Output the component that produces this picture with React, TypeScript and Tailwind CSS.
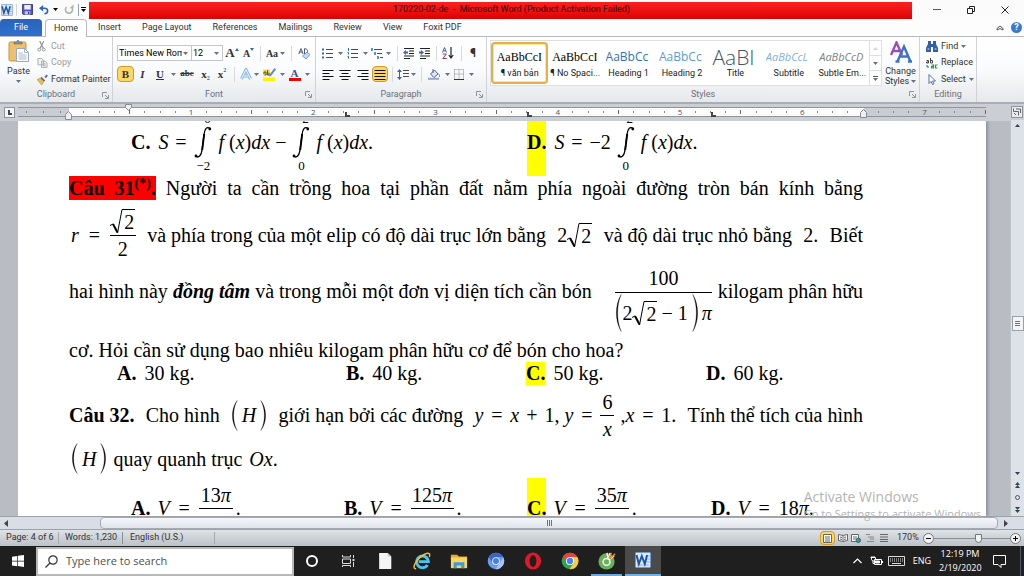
import React from "react";

type Kids = { children?: React.ReactNode; className?: string };

const Caret = ({ className = "text-gray-500" }: { className?: string }) => (
  <svg viewBox="0 0 5 3" className={`h-[3px] w-[5px] shrink-0 ${className}`} aria-hidden="true">
    <path d="M0 0h5L2.500 3z" fill="currentColor" />
  </svg>
);

const Sep = ({ className = "" }: { className?: string }) => (
  <span className={`flex justify-center ${className}`}>
    <i className="h-[15px] w-px bg-[#d5d8dc]" />
  </span>
);

const Tool = ({ label, className = "", children }: Kids & { label: string }) => (
  <button aria-label={label} className={`flex h-4 shrink-0 items-center justify-center ${className}`}>
    {children}
  </button>
);

const WordLogo = ({ className = "" }: { className?: string }) => (
  <svg viewBox="0 0 16 16" className={className} aria-hidden="true">
    <rect x=".5" y=".5" width="15" height="15" rx="1" fill="#dfeaf8" stroke="#6f9bd6" />
    <path d="M11 4h4M11 7h4M11 10h4M2 13h12" stroke="#8fb0dc" />
    <path d="M1.500 3l2.300 9L6.800 4l3 8 2.300-9" fill="none" stroke="#1d54ab" strokeWidth="2" />
  </svg>
);

/* ---------- title bar ---------- */

function TitleBar() {
  return (
    <header className="flex h-[19px] items-center bg-[#fbfbfc]">
      <div className="flex w-[89px] shrink-0 items-center pl-px">
        <WordLogo className="h-3 w-3" />
        <i className="ml-[3px] h-3 w-px bg-gray-300" />
        <button aria-label="Save" className="ml-[5px]">
          <svg viewBox="0 0 12 12" className="h-[11px] w-[11px]">
            <path d="M.5.500h11v11h-10l-1-1z" fill="#5557b8" stroke="#35378f" />
            <rect x="2.500" y="1" width="7" height="5" fill="#eef0fb" />
            <rect x="3" y="8" width="6" height="3.500" fill="#c9cdea" />
            <rect x="6.500" y="8.500" width="1.500" height="2.500" fill="#35378f" />
          </svg>
        </button>
        <button aria-label="Undo" className="ml-[6px]">
          <svg viewBox="0 0 12 12" className="h-[11px] w-[10px]">
            <path d="M2.500 4.500h4.500c4.500 0 4.500 6.500-.5 6.500" fill="none" stroke="#2f66bd" strokeWidth="2" />
            <path d="M0 4.500L5 .5v8z" fill="#2f66bd" />
          </svg>
        </button>
        <Caret className="ml-[4px] text-black" />
        <button aria-label="Redo" className="ml-[6px]">
          <svg viewBox="0 0 12 12" className="h-[11px] w-[10px]">
            <path d="M3 3a4.300 4.300 0 1 0 6 0" fill="none" stroke="#b4b4b4" strokeWidth="2" />
            <path d="M6.500 4.500h5V0z" fill="#b4b4b4" />
          </svg>
        </button>
        <i className="ml-[4px] h-3 w-px bg-gray-400" />
        <span className="ml-[2px] flex flex-col gap-px">
          <i className="h-px w-[5px] bg-black" />
          <Caret className="text-black" />
        </span>
      </div>
      <h1 className="mt-px flex h-[17px] flex-1 items-center justify-center whitespace-pre bg-linear-to-b from-[#fb2020] to-[#dc0000] pl-[22px] font-[Roboto] text-[9px] text-[#2c0000]">
        170220-02-de  -  Microsoft Word (Product Activation Failed)
      </h1>
      <div className="flex w-28 shrink-0 items-center">
        <button aria-label="Minimize" className="flex w-[50px] justify-center">
          <i className="h-px w-2 bg-gray-600" />
        </button>
        <button aria-label="Restore" className="flex w-[18px] justify-center">
          <svg viewBox="0 0 8 8" className="h-2 w-2" fill="none" stroke="#222">
            <path d="M.5 2.500h5v5h-5zM2.500 2V.5h5v5H6" />
          </svg>
        </button>
        <button aria-label="Close" className="ml-[21px] flex w-2 justify-center">
          <svg viewBox="0 0 8 8" className="h-2 w-2" fill="none" stroke="#222">
            <path d="M.5.500l7 7M7.500.500l-7 7" />
          </svg>
        </button>
      </div>
    </header>
  );
}

const tabs = ["Insert", "Page Layout", "References", "Mailings", "Review", "View", "Foxit PDF"];

function Tabs() {
  return (
    <nav className="flex h-[18px] items-end border-b border-[#b6bac0] bg-[#fdfdfe] font-[Roboto] text-[9px] text-[#333]">
      <button className="h-[17px] w-[42px] rounded-t-sm bg-linear-to-b from-[#2a62bb] to-[#2e70cf] text-white">File</button>
      <button className="-mb-px ml-[3px] h-[18px] w-[42px] rounded-t-sm border border-b-0 border-[#b6bac0] bg-white">Home</button>
      <div className="flex h-[17px] gap-[21px] pl-[11px]">
        {tabs.map((t) => (
          <button key={t} className="whitespace-nowrap">{t}</button>
        ))}
      </div>
      <div className="ml-auto flex h-[17px] items-center gap-[7px] pr-[2px]">
        <button aria-label="Minimize the Ribbon">
          <svg viewBox="0 0 8 6" className="h-[6px] w-2" fill="none" stroke="#555">
            <path d="M1 3.500L4 1l3 2.500v1.500L4 3.500 1 5z" />
          </svg>
        </button>
        <button aria-label="Help" className="flex h-[11px] w-[11px] items-center justify-center rounded-full bg-[#3c78cf] text-[9px] font-bold text-white">?</button>
      </div>
    </nav>
  );
}

/* ---------- ribbon ---------- */

function Group({ name, className = "", launcher = true, children }: Kids & { name: string; launcher?: boolean }) {
  return (
    <section className={`flex shrink-0 flex-col border-r border-[#cfd3d8] ${className}`}>
      <div className="flex-1">{children}</div>
      <div className="flex h-[15px] items-center">
        <span className="flex-1 text-center text-[#6a7078]">{name}</span>
        {launcher && (
          <button aria-label={`${name} options`} className="-ml-[10px] mr-[3px]">
            <svg viewBox="0 0 7 7" className="h-[7px] w-[7px]" fill="none" stroke="#8d949c">
              <path d="M.5 5V.5H5M3 3l3 3M6.500 3v3.500H3" />
            </svg>
          </button>
        )}
      </div>
    </section>
  );
}

function Clipboard() {
  return (
    <Group name="Clipboard" className="w-[113px]">
      <div className="flex pt-px">
        <button className="flex w-[37px] flex-col items-center pt-[2px]">
          <svg viewBox="0 0 22 22" className="h-[22px] w-[22px]">
            <rect x="1" y="2" width="17" height="19" rx="1.500" fill="#efc06c" stroke="#c8933e" />
            <path d="M6 4V2h2.500C9-.2 11-.2 11.500 2H14v2z" fill="#8c9199" stroke="#666b73" strokeWidth=".6" />
            <path d="M8.500 8.500h8l4 4v9h-12z" fill="#fff" stroke="#9aa9c0" />
            <path d="M16.500 8.500v4h4M10.500 13h4M10.500 15h8M10.500 17h8M10.500 19h8" fill="none" stroke="#8fa3c4" strokeWidth=".8" />
          </svg>
          <span className="mt-[4px] leading-[11px]">Paste</span>
          <Caret className="mt-[3px] text-gray-500" />
        </button>
        <div className="flex flex-col">
          <button className="flex h-[17px] items-center gap-[5px] text-[#9b9b9b]">
            <svg viewBox="0 0 10 12" className="h-[11px] w-[9px]" fill="none" stroke="#8f8f8f">
              <path d="M3 0l4 8M7.500 0l-4 8" strokeWidth="1.300" />
              <circle cx="2.500" cy="9.500" r="1.600" />
              <circle cx="7.500" cy="9.500" r="1.600" />
            </svg>
            Cut
          </button>
          <button className="flex h-[16px] items-center gap-[3px] text-[#9b9b9b]">
            <svg viewBox="0 0 11 11" className="h-[10px] w-[11px]" fill="#f2f2f2" stroke="#a8a8a8">
              <path d="M.5.500h4l2 2v5h-6zM4.500 3.500h4l2 2v5h-6z" />
              <path d="M6 6.500h3M6 8.500h3" />
            </svg>
            Copy
          </button>
          <button className="flex h-[17px] items-center gap-[3px] whitespace-nowrap">
            <svg viewBox="0 0 12 12" className="h-[11px] w-[11px]">
              <path d="M8 3l2.500-2.500L12 2 9.500 4.500z" fill="#5573a8" />
              <path d="M5 3l4 4-1.500 1.500-4-4z" fill="#6a6f7c" />
              <path d="M3.500 4.500L7.500 8.500 5 12 0 6z" fill="#e9bd50" stroke="#b98a2a" strokeWidth=".6" />
            </svg>
            Format Painter
          </button>
        </div>
      </div>
    </Group>
  );
}

function Combo({ label, value, className }: { label: string; value: string; className: string }) {
  return (
    <span className={`relative flex h-4 shrink-0 items-center border border-[#c3c7cc] bg-white ${className}`}>
      <select aria-label={label} defaultValue={value} className="w-full appearance-none overflow-hidden whitespace-nowrap bg-transparent pl-px pr-[9px] text-[9px] leading-[14px] text-black outline-none">
        <option>{value}</option>
      </select>
      <Caret className="pointer-events-none absolute right-[3px] text-gray-500" />
    </span>
  );
}

function FontGroup() {
  return (
    <Group name="Font" className="w-[203px]">
      <div className="flex flex-col gap-[5px] pl-1 pt-[8px]">
        <div className="flex items-center">
          <Combo label="Font" value="Times New Rom" className="w-[75px]" />
          <Combo label="Font Size" value="12" className="-ml-px w-8" />
          <Tool label="Grow Font" className="w-[18px] font-serif text-[13px] font-bold">
            A<svg viewBox="0 0 4 3" className="mb-2 h-[3px] w-1"><path d="M0 3h4L2 0z" fill="#3568b5" /></svg>
          </Tool>
          <Tool label="Shrink Font" className="w-[15px] font-serif text-[10px] font-bold">
            A<svg viewBox="0 0 4 3" className="mb-2 h-[3px] w-1"><path d="M0 0h4L2 3z" fill="#3568b5" /></svg>
          </Tool>
          <Sep className="w-2" />
          <Tool label="Change Case" className="w-[23px] gap-[2px] font-serif text-[10px] font-bold">Aa<Caret /></Tool>
          <Sep className="w-2" />
          <Tool label="Clear Formatting" className="w-[18px]">
            <svg viewBox="0 0 12 12" className="h-3 w-3">
              <path d="M.8 7L3 1.500 5 7M1.500 5h3M6.500 1.500V7M6.500 2c4-1.500 4 5.500 0 4.500" fill="none" stroke="#4a5a7a" />
              <path d="M4.500 9l4.500-4 3 2.500L8 12z" fill="#c8d6f0" stroke="#5b7bb5" strokeWidth=".7" />
            </svg>
          </Tool>
        </div>
        <div className="flex items-center">
          <Tool label="Bold" className="w-[17px] rounded-sm border border-[#d09a2c] bg-[#fcd768] font-serif text-[11px] font-bold">B</Tool>
          <Tool label="Italic" className="w-[17px] font-serif text-[11px] font-bold italic">I</Tool>
          <Tool label="Underline" className="w-[18px] font-serif text-[11px] font-bold underline">U</Tool>
          <Tool label="Underline style" className="w-2"><Caret /></Tool>
          <Tool label="Strikethrough" className="w-5 font-serif text-[9px] font-bold line-through">abc</Tool>
          <Tool label="Subscript" className="w-[17px] font-serif text-[11px] font-bold">
            x<span className="mt-2 text-[6px] text-[#3568b5]">2</span>
          </Tool>
          <Tool label="Superscript" className="w-4 font-serif text-[11px] font-bold">
            x<span className="mb-2 text-[6px] text-[#3568b5]">2</span>
          </Tool>
          <Sep className="w-[9px]" />
          <Tool label="Text Effects" className="w-[14px]">
            <svg viewBox="0 0 12 12" className="h-3 w-3" fill="none">
              <path d="M1.500 11L6 1.500 10.500 11M3.500 8h5" stroke="#8dbbe8" strokeWidth="3" />
              <path d="M1.500 11L6 1.500 10.500 11M3.500 8h5" stroke="#e8f3fc" strokeWidth="1" />
            </svg>
          </Tool>
          <Tool label="Text Effects menu" className="w-[7px]"><Caret /></Tool>
          <Tool label="Highlight" className="w-[19px]">
            <svg viewBox="0 0 13 13" className="h-[13px] w-[13px]">
              <path d="M0 9.500h12V13H0z" fill="#fff200" />
              <path d="M0 1.500h7v6H0z" fill="#f2e04a" />
              <path d="M1 6V4h2v3H1.500M4.500 2v5H6V4.500" fill="none" stroke="#333" strokeWidth=".8" />
              <path d="M11.500 0L13 1.500 8 8l-2 .5.500-2z" fill="#6b88bd" />
            </svg>
          </Tool>
          <Tool label="Highlight color" className="w-[7px]"><Caret /></Tool>
          <Tool label="Font Color" className="w-[17px] flex-col font-serif text-[11px] font-bold leading-[10px] text-[#2f559c]">
            A<i className="h-[3px] w-3 bg-[#f00000]" />
          </Tool>
          <Tool label="Font Color menu" className="w-2"><Caret /></Tool>
        </div>
      </div>
    </Group>
  );
}

const Glyph = ({ children, className = "h-[11px] w-3" }: Kids) => (
  <svg viewBox="0 0 12 11" className={className} fill="none" stroke="#4a4a4a">{children}</svg>
);

function ParagraphGroup() {
  return (
    <Group name="Paragraph" className="w-[171px]">
      <div className="flex flex-col gap-[5px] pl-[3px] pt-[8px]">
        <div className="flex items-center">
          <Tool label="Bullets" className="w-[17px]">
            <Glyph>
              <path d="M4 1.500h7M4 5.500h7M4 9.500h7" />
              <path d="M0 1.500h2M0 5.500h2M0 9.500h2" stroke="#3467b8" strokeWidth="2" />
            </Glyph>
          </Tool>
          <Tool label="Bullet library" className="w-2"><Caret /></Tool>
          <Tool label="Numbering" className="w-[17px]">
            <Glyph>
              <path d="M4 1.500h7M4 5.500h7M4 9.500h7" />
              <path d="M1.500 0v3M.5 4.500h1v2M.5 8.500h1v2" stroke="#3467b8" />
            </Glyph>
          </Tool>
          <Tool label="Number library" className="w-2"><Caret /></Tool>
          <Tool label="Multilevel List" className="w-[15px]">
            <Glyph>
              <path d="M3 1.500h8M6 5.500h5M9 9.500h3" />
              <path d="M1 0v3M4 4v3M7 8v3" stroke="#3467b8" strokeWidth="1.500" />
            </Glyph>
          </Tool>
          <Tool label="List library" className="w-[9px]"><Caret /></Tool>
          <Sep className="w-2" />
          <Tool label="Decrease Indent" className="w-4">
            <Glyph>
              <path d="M1 .5h10M6 3h5M6 5.500h5M1 8h10M1 10.500h6" stroke="#222" />
              <path d="M5 4.500H2" stroke="#3467b8" strokeWidth="2" />
              <path d="M0 4.500L3 2v5z" fill="#3467b8" stroke="none" />
            </Glyph>
          </Tool>
          <Tool label="Increase Indent" className="w-4">
            <Glyph>
              <path d="M1 .5h10M6 3h5M6 5.500h5M1 8h10M1 10.500h6" stroke="#222" />
              <path d="M0 4.500h3" stroke="#3467b8" strokeWidth="2" />
              <path d="M5 4.500L2 2v5z" fill="#3467b8" stroke="none" />
            </Glyph>
          </Tool>
          <Sep className="w-[6px]" />
          <Tool label="Sort" className="w-[18px]">
            <svg viewBox="0 0 12 12" className="h-3 w-3" fill="none">
              <path d="M.5 5.500L2.500.500l2 5M1.300 3.800h2.500" stroke="#3467b8" />
              <path d="M.8 7h3.500L.8 11.500h4" stroke="#a03a5a" />
              <path d="M9 0v10M6.800 8L9 11l2.200-3" stroke="#222" strokeWidth="1.200" />
            </svg>
          </Tool>
          <Sep className="w-2" />
          <Tool label="Show marks" className="w-4 text-[12px] font-bold">¶</Tool>
        </div>
        <div className="flex items-center">
          <Tool label="Align Left" className="w-[17px]">
            <Glyph><path d="M.5 1.500h11M.5 4.500h7M.5 7.500h11M.5 10.500h7" stroke="#111" strokeWidth="1.200" /></Glyph>
          </Tool>
          <Tool label="Center" className="w-[17px]">
            <Glyph><path d="M.5 1.500h11M2.500 4.500h7M.5 7.500h11M2.500 10.500h7" stroke="#111" strokeWidth="1.200" /></Glyph>
          </Tool>
          <Tool label="Align Right" className="w-[19px]">
            <Glyph><path d="M.5 1.500h11M4.500 4.500h7M.5 7.500h11M4.500 10.500h7" stroke="#111" strokeWidth="1.200" /></Glyph>
          </Tool>
          <Tool label="Justify" className="w-4 rounded-sm border border-[#d09a2c] bg-[#fcd768]">
            <Glyph><path d="M.5 1.500h11M.5 4.500h11M.5 7.500h11M.5 10.500h11" stroke="#111" strokeWidth="1.200" /></Glyph>
          </Tool>
          <Sep className="w-2" />
          <Tool label="Line Spacing" className="w-[14px]">
            <Glyph>
              <path d="M6 1.500h6M6 4.500h6M6 7.500h6" />
              <path d="M2.500 1v9" stroke="#3467b8" />
              <path d="M0 3L2.500 0 5 3zM0 8l2.500 3L5 8z" fill="#3467b8" stroke="none" />
            </Glyph>
          </Tool>
          <Tool label="Line Spacing menu" className="w-[7px]"><Caret /></Tool>
          <Sep className="w-2" />
          <Tool label="Shading" className="w-[18px]">
            <Glyph>
              <path d="M2.500 5L6.500 1 10 5 6 8.500z" fill="#dfe6f2" stroke="#56657f" />
              <path d="M5 4V0M10.500 5c1.500 1 1.500 2 1 3" stroke="#56657f" />
              <path d="M0 9.800h11" stroke="#8fa9d2" strokeWidth="2" />
            </Glyph>
          </Tool>
          <Tool label="Shading menu" className="w-2"><Caret /></Tool>
          <Tool label="Borders" className="w-4">
            <Glyph>
              <path d="M1.500.500h9v9.500M1.500.500V10M6 .5V10M1.500 5h9" stroke="#8d8d8d" strokeDasharray="1 1" />
              <path d="M1 10.500h10" stroke="#333" />
            </Glyph>
          </Tool>
          <Tool label="Borders menu" className="w-2"><Caret /></Tool>
        </div>
      </div>
    </Group>
  );
}

const styleItems = [
  { name: "¶ văn bản", sample: "AaBbCcI", look: "font-[Liberation_Serif] text-[12px] text-black" },
  { name: "¶ No Spaci...", sample: "AaBbCcI", look: "font-[Liberation_Serif] text-[12px] text-black" },
  { name: "Heading 1", sample: "AaBbCc", look: "font-[Open_Sans] text-[12px] text-[#2e74b5]" },
  { name: "Heading 2", sample: "AaBbCc", look: "font-[Open_Sans] text-[12px] text-[#5b9bd5]" },
  { name: "Title", sample: "AaBI", look: "font-[Open_Sans] text-[21px] font-light text-[#44546a]" },
  { name: "Subtitle", sample: "AaBbCcL", look: "font-[Open_Sans] text-[11px] italic text-[#7fb2e0]" },
  { name: "Subtle Em...", sample: "AaBbCcD", look: "font-[Open_Sans] text-[11px] italic text-[#808080]" },
];

function StylesGroup() {
  return (
    <Group name="Styles" className="min-w-[433px] flex-1">
      <div className="flex pl-[3px] pt-[3px]">
        <div className="flex h-[46px] flex-1 border border-[#dcdfe3] bg-white">
          {styleItems.map((s, i) => (
            <button
              key={s.name}
              className={`flex min-w-0 flex-1 basis-0 flex-col items-center overflow-hidden ${i === 0 ? "my-px rounded-sm border-2 border-[#e3b04b] pt-[3px] ring-1 ring-inset ring-[#fde79a]" : "pt-[6px]"}`}
            >
              <span className={`flex h-5 w-[46px] items-center justify-start overflow-hidden whitespace-nowrap leading-5 ${s.look}`}>{s.sample}</span>
              <span className="whitespace-nowrap leading-[13px] text-[#222]">{s.name}</span>
            </button>
          ))}
          <div className="flex w-3 flex-col border-l border-[#dcdfe3]">
            <button aria-label="Previous styles" className="flex flex-1 items-center justify-center border-b border-[#dcdfe3]"><Caret className="rotate-180 text-gray-300" /></button>
            <button aria-label="Next styles" className="flex flex-1 items-center justify-center border-b border-[#dcdfe3]"><Caret /></button>
            <button aria-label="More styles" className="flex flex-1 flex-col items-center justify-center gap-px"><i className="h-px w-[5px] bg-gray-600" /><Caret /></button>
          </div>
        </div>
        <button className="flex w-[37px] flex-col items-center pt-px leading-[10px]">
          <svg viewBox="0 0 22 22" className="h-[22px] w-[22px]" fill="none">
            <path d="M1 14L6.500 1.500 12 14M3.500 10h6" stroke="#9a4fb8" strokeWidth="2.400" />
            <path d="M7.500 20.500L14 5.500l6.500 15M10 15.500h8M5.500 20.500h4M18 20.500h4" stroke="#3a74c8" strokeWidth="2.400" />
          </svg>
          <span className="mt-[3px]">Change</span>
          <span className="flex items-center gap-[2px]">Styles <Caret /></span>
        </button>
      </div>
    </Group>
  );
}

function EditingGroup() {
  return (
    <Group name="Editing" launcher={false} className="w-[57px]">
      <div className="flex flex-col pl-[6px] pt-px">
        <button className="flex h-[17px] items-center gap-[3px]">
          <svg viewBox="0 0 12 11" className="h-[11px] w-3" fill="#2f5fa8">
            <path d="M2 0h3v3h2V0h3v3l2 4v4H7V6H5v5H0V7l2-4z" />
            <path d="M1.500 8h2M8.500 8h2" stroke="#cfe0f7" />
          </svg>
          Find <Caret />
        </button>
        <button className="flex h-[16px] items-center gap-[3px]">
          <svg viewBox="0 0 12 11" className="h-[11px] w-3" fill="none">
            <path d="M.5 2.500h2v2.500h-2v-1h2M4.500 0v5h2V2.500h-2" stroke="#444" />
            <path d="M5.500 7h2v3h-2V8.500h2M11.500 7H9.500v3h2" stroke="#3d8f4a" strokeWidth="1.200" />
            <path d="M1 7v2h2" stroke="#2f5fa8" />
          </svg>
          Replace
        </button>
        <button className="flex h-[17px] items-center gap-[3px]">
          <svg viewBox="0 0 12 11" className="h-[11px] w-3">
            <path d="M3 .5v9l2-2 1.500 3 1.500-.8L6.500 7h3z" fill="#fff" stroke="#4b72b0" />
          </svg>
          Select <Caret />
        </button>
      </div>
    </Group>
  );
}

/* ---------- ruler ---------- */

const TabStop = ({ className = "" }: { className?: string }) => (
  <i className={`absolute bottom-[-1px] h-[5px] w-[5px] border-b-2 border-l-2 border-[#444] ${className}`} />
);

const Marker = ({ className = "", down = false }: { className?: string; down?: boolean }) => (
  <svg viewBox="0 0 7 9" className={`absolute h-[9px] w-[7px] ${className}`} fill="#eceef0" stroke="#8a8d92">
    {down ? <path d="M.5.500h6v3L3.500 6.500.5 3.500z" /> : <path d="M3.500.500l3 3v5h-6v-5z" />}
  </svg>
);

function Tick({ n, white }: { n: number; white: boolean }) {
  return (
    <span className={`flex min-w-0 flex-1 items-center justify-end ${white ? "bg-[#fcfcfd]" : "bg-[#c9cdd3]"}`}>
      {n % 8 === 0 ? (
        <b className="relative -mr-[2px] text-[8px] font-normal leading-none text-[#555]">{n / 8}</b>
      ) : n % 4 === 0 ? (
        <i className="h-1 w-px bg-[#666]" />
      ) : (
        <i className="h-[2px] w-px bg-[#888]" />
      )}
    </span>
  );
}

function Ruler() {
  return (
    <div className="flex h-[18px] items-center border-t-2 border-[#a9adb4] bg-[#cbcfd5]">
      <button aria-label="Tab selector" className="ml-1 flex h-[11px] w-[11px] items-center justify-center border border-[#8f949b] bg-[#f4f5f6]">
        <i className="h-[5px] w-[4px] border-b-2 border-l-2 border-[#444]" />
      </button>
      <div className="relative ml-[3px] flex h-[10px] flex-1 border-y border-[#8f949b]">
        <div className="flex w-[51px] shrink-0 items-center justify-around bg-[#c9cdd3]">
          {[0, 1, 2].map((i) => <i key={i} className="h-[2px] w-px bg-[#888]" />)}
        </div>
        {Array.from({ length: 60 }, (_, i) => <Tick key={i} n={i + 1} white={i < 52} />)}
        <Marker down className="left-[107px] top-[-4px]" />
        <Marker className="left-[47px] top-[3px]" />
        <Marker className="right-[119px] top-[1px]" />
        <TabStop className="left-[327px]" />
        <TabStop className="left-[509px]" />
        <TabStop className="left-[693px]" />
      </div>
      <div className="flex w-[38px] shrink-0 justify-end pr-px">
        <button aria-label="View Ruler" className="flex h-3 w-3 items-center justify-center border border-[#8f949b] bg-[#e8eaed]">
          <svg viewBox="0 0 8 8" className="h-2 w-2" fill="none" stroke="#666"><path d="M.5.500v3h5v4M3 1h4.500v4M1 5l2 2" /></svg>
        </button>
      </div>
    </div>
  );
}

/* ---------- math ---------- */

const Eq = () => <span className="w-[15px] shrink-0 text-center">=</span>;

const Frac = ({ top, bottom, className = "" }: { top: React.ReactNode; bottom?: React.ReactNode; className?: string }) => (
  <span className={`inline-flex flex-col items-stretch text-center ${className}`}>
    <span className="flex h-[26px] items-center justify-center">{top}</span>
    <i className="h-px bg-black" />
    <span className="flex h-[26px] items-center justify-center">{bottom}</span>
  </span>
);

const Root = ({ children }: Kids) => (
  <span className="inline-flex items-stretch leading-[24px]">
    <svg viewBox="0 0 13 25" className="h-[25px] w-[13px] shrink-0" fill="none" stroke="#000">
      <path d="M0 16.500l3-1.500" />
      <path d="M3 15l4.500 8.500" strokeWidth="2" />
      <path d="M7.500 24L12 .5h1" />
    </svg>
    <span className="border-t border-black px-px">{children}</span>
  </span>
);

const Paren = ({ right = false, className = "h-[31px]" }: { right?: boolean; className?: string }) => (
  <svg viewBox="0 0 7 32" preserveAspectRatio="none" className={`w-[7px] shrink-0 ${right ? "-scale-x-100" : ""} ${className}`}>
    <path d="M6.200.500C-.2 9-.2 23 6.200 31.500 1.400 23 1.400 9 6.200.500z" fill="#000" stroke="#000" strokeWidth=".3" />
  </svg>
);

const Integral = ({ from, to }: { from: string; to: string }) => (
  <span className="inline-flex w-[20px] flex-col items-center text-[13px] leading-[14px]">
    <span className="pl-2">{to}</span>
    <svg viewBox="0 0 18 33" className="h-[33px] w-[18px]">
      <path d="M16.500 2.800C13-.2 10.800 2.500 10 8.500L8.200 23C7.300 30 4.500 32.500 1.500 30" fill="none" stroke="#000" strokeWidth="1.300" />
      <path d="M10.200 8L8.200 24" stroke="#000" strokeWidth="1.900" />
      <circle cx="15.800" cy="3" r="1.400" />
      <circle cx="2" cy="30" r="1.400" />
    </svg>
    <span>{from}</span>
  </span>
);

const Fx = ({ end = true }: { end?: boolean }) => (
  <span className="whitespace-pre"><i>f</i> (<i>x</i>)<i>dx</i>{end && "."}</span>
);

const Mark = ({ children, className = "" }: Kids) => (
  <b className={`flex items-center bg-[#ffff00] ${className}`}>{children}</b>
);

/* ---------- document ---------- */

function Page() {
  return (
    <article className="min-w-0 flex-1 bg-white pl-[51px] pr-[123px] font-[Liberation_Serif] text-[20px] leading-[24px] text-black shadow-[2px_0_3px_#8d929a]">
      <div className="grid h-[55px] grid-cols-[396fr_336fr] pl-[62px]">
        <div className="flex h-[42px] items-center gap-2">
          <b>C.</b>
          <span className="flex items-center gap-[5px]"><i>S</i> <Eq /> <Integral from="−2" to="0" /> <Fx end={false} /> <span>−</span><Integral from="0" to="2" /> <Fx /></span>
        </div>
        <div className="flex h-[42px] items-center gap-2">
          <Mark className="h-[55px] self-start pb-[13px]">D.</Mark>
          <span className="flex items-center gap-[5px]"><i>S</i> <Eq /> <span>−2</span><Integral from="0" to="2" /> <Fx /></span>
        </div>
      </div>
      <p className="h-6 text-justify [text-align-last:justify]">
        <b className="inline-block h-6 bg-[#ff0000]"><span>Câu&nbsp; 31</span><sup className="text-[14px] leading-none">(*)</sup>.</b> Người ta cần trồng hoa tại phần đất nằm phía ngoài đường tròn bán kính bằng
      </p>
      <div className="flex h-[67px] items-center justify-between whitespace-nowrap pt-[3px]">
        <span className="flex items-center gap-[8px] pl-[2px]">
          <i>r</i> <Eq /> <Frac className="w-[26px]" top={<Root>2</Root>} bottom="2" />
        </span>
        <span>và phía trong của một elip có độ dài trục lớn bằng</span>
        <span className="flex items-center">2<Root>2</Root></span>
        <span>và độ dài trục nhỏ bằng</span>
        <span>2.</span>
        <span>Biết</span>
      </div>
      <div className="flex h-[68px] items-start justify-between whitespace-nowrap">
        <span className="leading-[48px]">hai hình này <b><i>đồng tâm</i></b> và trong mỗi một đơn vị diện tích cần bón</span>
        <span className="flex items-start">
          <span className="flex flex-col">
            <span className="flex h-[25px] items-center justify-center pb-1">100</span>
            <i className="h-px bg-black" />
            <span className="flex h-[40px] items-center">
              <Paren className="h-[38px]" />2<Root>2</Root><span className="px-1">− 1</span><Paren right className="h-[38px]" /><i className="pl-[3px]">π</i>
            </span>
          </span>
          <span className="pl-[6px] leading-[48px]">kilogam phân hữu</span>
        </span>
      </div>
      <p className="h-[27px] whitespace-nowrap pt-[3px]">cơ. Hỏi cần sử dụng bao nhiêu kilogam phân hữu cơ để bón cho hoa?</p>
      <div className="grid h-[23px] grid-cols-[229fr_180fr_180fr_157fr] pl-12 leading-[23px]">
        <span className="flex gap-2"><b>A.</b> 30 kg.</span>
        <span className="flex gap-2"><b>B.</b> 40 kg.</span>
        <span className="flex gap-2"><Mark>C.</Mark> 50 kg.</span>
        <span className="flex gap-2"><b>D.</b> 60 kg.</span>
      </div>
      <div className="flex h-[52px] items-center justify-between whitespace-nowrap pt-2">
        <b>Câu 32.</b>
        <span>Cho hình</span>
        <span className="flex items-center"><Paren /><i className="px-1">H</i><Paren right /></span>
        <span>giới hạn bởi các đường</span>
        <span className="flex items-center gap-[6px]">
          <i>y</i> <Eq /> <i>x</i> <span className="px-px">+</span> <span>1, <i>y</i></span> <Eq /> <Frac className="w-[14px]" top="6" bottom={<i>x</i>} />
          <span>,<i>x</i></span> <Eq /> <span>1.</span>
        </span>
        <span>Tính thể tích của hình</span>
      </div>
      <div className="flex h-[41px] items-center gap-[6px] pl-[2px] pt-[2px]">
        <span className="flex items-center"><Paren /><i className="px-1">H</i><Paren right /></span>
        <span>quay quanh trục</span> <span className="pl-px"><i>Ox</i>.</span>
      </div>
      <div className="grid h-[60px] grid-cols-[213fr_183fr_184fr_152fr] pl-[62px]">
        <span className="flex items-center gap-[7px]"><b>A.</b><i>V</i> <Eq /> <Frac className="w-[34px]" top={<>13<i>π</i></>} /><span className="-ml-1">.</span></span>
        <span className="flex items-center gap-[7px]"><b>B.</b><i>V</i> <Eq /> <Frac className="w-[43px]" top={<>125<i>π</i></>} /><span className="-ml-1">.</span></span>
        <span className="flex items-center gap-[7px]"><Mark className="h-full">C.</Mark><i>V</i> <Eq /> <Frac className="w-[34px]" top={<>35<i>π</i></>} /><span className="-ml-1">.</span></span>
        <span className="flex items-center gap-[7px]"><b>D.</b><i>V</i> <Eq /> <span>18<i>π</i>.</span></span>
      </div>
    </article>
  );
}

function VerticalScroll() {
  return (
    <div className="flex w-[14px] shrink-0 flex-col items-center border-l border-[#bfc4cb] bg-[#dde1e8] pb-[3px] pt-1">
      <Caret className="rotate-180 text-gray-700" />
      <div className="grow-[190]" />
      <div className="flex h-[15px] w-3 flex-col items-center justify-center gap-px border border-[#9ba0a8] bg-[#f3f4f7]">
        <i className="h-px w-[5px] bg-gray-500" />
        <i className="h-px w-[5px] bg-gray-500" />
        <i className="h-px w-[5px] bg-gray-500" />
      </div>
      <div className="grow-[142]" />
      <Caret className="text-gray-700" />
      <button aria-label="Previous page" className="mt-[7px] flex flex-col"><Caret className="rotate-180 text-gray-700" /><Caret className="rotate-180 text-gray-700" /></button>
      <button aria-label="Select browse object" className="mt-[7px] h-[5px] w-[5px] rounded-full border border-gray-600" />
      <button aria-label="Next page" className="mt-[7px] flex flex-col"><Caret className="text-gray-700" /><Caret className="text-gray-700" /></button>
    </div>
  );
}

function HorizontalScroll() {
  return (
    <div className="flex h-[14px] items-center border-y border-[#9da2aa] bg-[#d9dee6]">
      <svg viewBox="0 0 4 7" className="ml-1 h-[7px] w-1"><path d="M4 0v7L0 3.500z" fill="#444" /></svg>
      <div className="ml-[92px] flex h-3 flex-1 items-center justify-center gap-px rounded-sm border border-[#a4a9b2] bg-linear-to-b from-[#f6f7fa] to-[#dfe3ea]">
        <i className="h-[6px] w-px bg-gray-500" />
        <i className="h-[6px] w-px bg-gray-500" />
        <i className="h-[6px] w-px bg-gray-500" />
      </div>
      <svg viewBox="0 0 4 7" className="ml-[6px] mr-[16px] h-[7px] w-1"><path d="M0 0v7l4-3.500z" fill="#444" /></svg>
    </div>
  );
}

function StatusBar() {
  return (
    <div className="flex h-4 items-center bg-linear-to-b from-[#dfe2e6] to-[#bdc2c9] font-[Roboto] text-[9px] text-[#333]">
      <span className="w-[58px] pl-[6px]">Page: 4 of 6</span>
      <i className="h-3 w-px bg-[#a4a9b0]" />
      <span className="w-[63px] pl-[6px]">Words: 1,230</span>
      <i className="h-3 w-px bg-[#8b9098]" />
      <span className="w-[91px] pl-[7px]">English (U.S.)</span>
      <i className="h-3 w-px bg-[#a4a9b0]" />
      <div className="ml-auto flex items-center">
        <button aria-label="Print Layout" className="flex h-[14px] w-[15px] items-center justify-center rounded-sm border border-[#d09a2c] bg-[#fcd768]">
          <svg viewBox="0 0 9 9" className="h-[9px] w-[9px]" fill="#fff" stroke="#666"><path d="M.5.500h8v8h-8zM2 3h5M2 5h5M2 7h5" /></svg>
        </button>
        <button aria-label="Full Screen Reading" className="ml-px w-[13px] pl-[2px]">
          <svg viewBox="0 0 10 8" className="h-2 w-[10px]" fill="#fff" stroke="#666"><path d="M.5.500L5 1.500 9.500.500v6L5 7.500.5 6.500zM5 1.500v6M2 3l2 .5M2 5l2 .5M8 3l-2 .5M8 5l-2 .5" /></svg>
        </button>
        <button aria-label="Web Layout" className="w-[14px] pl-[2px]">
          <svg viewBox="0 0 10 9" className="h-[9px] w-[10px]" fill="#fff" stroke="#666"><path d="M.5.500h7v7h-7zM2 3h4M2 5h3" /><circle cx="7.300" cy="6.300" r="2.200" fill="#3d8fd0" stroke="#2b6a4a" /></svg>
        </button>
        <button aria-label="Outline" className="w-[14px] pl-[3px]">
          <svg viewBox="0 0 8 8" className="h-2 w-2" stroke="#888"><path d="M0 .5h4M2 3h6M4 5h4M1 7.500h7" /></svg>
        </button>
        <button aria-label="Draft" className="w-[14px] pl-[3px]">
          <svg viewBox="0 0 8 8" className="h-2 w-2" stroke="#666"><path d="M0 .5h8M0 3h8M0 5.500h8M0 7.500h8" /></svg>
        </button>
        <button className="ml-[6px] w-[26px] text-left">170%</button>
        <button aria-label="Zoom Out" className="flex h-[11px] w-[11px] items-center justify-center rounded-full border border-[#70757d] bg-[#f2f3f5]"><i className="h-px w-[5px] bg-black" /></button>
        <input
          type="range"
          aria-label="Zoom"
          min={0}
          max={100}
          defaultValue={60}
          className="h-3 w-[76px] appearance-none bg-[linear-gradient(#888d95,#888d95)] bg-[length:100%_1px] bg-center bg-no-repeat [&::-webkit-slider-thumb]:h-[9px] [&::-webkit-slider-thumb]:w-[7px] [&::-webkit-slider-thumb]:appearance-none [&::-webkit-slider-thumb]:rounded-b-full [&::-webkit-slider-thumb]:border [&::-webkit-slider-thumb]:border-[#70757d] [&::-webkit-slider-thumb]:bg-[#f2f3f5]"
        />
        <button aria-label="Zoom In" className="mr-[3px] flex h-[11px] w-[11px] items-center justify-center rounded-full border border-[#70757d] bg-[#f2f3f5]">
          <svg viewBox="0 0 5 5" className="h-[5px] w-[5px]" stroke="#000"><path d="M0 2.500h5M2.500 0v5" /></svg>
        </button>
      </div>
    </div>
  );
}

/* ---------- taskbar ---------- */

const AppIcon = ({ label, className = "w-[37px]", children }: Kids & { label: string }) => (
  <button aria-label={label} className={`flex h-full items-center justify-center ${className}`}>
    <svg viewBox="0 0 20 20" className="h-[18px] w-[18px]">{children}</svg>
  </button>
);

function Taskbar() {
  return (
    <footer className="flex h-[30px] items-center bg-[#1f1f1f] text-white">
      <button aria-label="Start" className="flex w-9 justify-center">
        <svg viewBox="0 0 12 12" className="h-3 w-3" fill="#fff"><path d="M0 1.700l5.300-.8v4.800H0zM6 .8L12 0v5.700H6zM0 6.400h5.300v4.800L0 10.400zM6 6.400h6V12l-6-.9z" /></svg>
      </button>
      <label className="flex h-[29px] w-[258px] items-center border-2 border-[#b9b9b9] bg-white pl-[7px]">
        <svg viewBox="0 0 13 13" className="h-[13px] w-[13px]" fill="none" stroke="#333" strokeWidth="1.200"><circle cx="8" cy="5" r="4.200" /><path d="M5 8L.5 12.500" /></svg>
        <input aria-label="Search" placeholder="Type here to search" className="ml-[8px] w-48 bg-transparent text-[11px] text-black outline-none placeholder:text-[#505050]" />
      </label>
      <button aria-label="Cortana" className="flex w-[36px] justify-center"><i className="h-3 w-3 rounded-full border-2 border-white" /></button>
      <button aria-label="Task View" className="flex w-[36px] justify-center">
        <svg viewBox="0 0 13 12" className="h-3 w-[13px]" fill="none" stroke="#ddd"><path d="M.5 0v2h8V0M.5 4h8v4.500h-8zM.5 12v-1.500h8V12M11.500 0v3M11.500 7v5" /><path d="M10.500 5h2" strokeWidth="2" /></svg>
      </button>
      <AppIcon label="Document">
        <path d="M3.500 1H13l4 4v14H3.500z" fill="#f5f5f5" /><path d="M13 1v4h4z" fill="#c9c9c9" />
      </AppIcon>
      <AppIcon label="Internet Explorer">
        <path d="M16 14.500A6.500 6.500 0 1 1 17 10.700H6.500" fill="none" stroke="#4cc3f1" strokeWidth="3.200" />
        <path d="M3.500 18.500C-3 19 5 6 13 2.500c5-2.300 6.500-.5 5 3" fill="none" stroke="#f3bf2c" strokeWidth="1.600" />
      </AppIcon>
      <AppIcon label="File Explorer">
        <path d="M1 3h7l2 2h9v3H1z" fill="#e9a92d" /><path d="M1 6h18v12H1z" fill="#fcd462" /><path d="M4 18v-6.500h12V18h-3.500v-3h-5v3z" fill="#3d9be0" />
      </AppIcon>
      <AppIcon label="Chromium">
        <circle cx="10" cy="10" r="9.200" fill="#6a9bf0" />
        <path d="M2 5.500A9.200 9.200 0 0 1 18 5.500h-8L6 12z" fill="#3a66c4" />
        <path d="M18.200 6A9.200 9.200 0 0 1 9.500 19.200l4.500-7z" fill="#a6c6fb" />
        <circle cx="10" cy="10" r="4.300" fill="#e8f0fe" /><circle cx="10" cy="10" r="3.300" fill="#4a7de0" />
      </AppIcon>
      <AppIcon label="Opera">
        <ellipse cx="10" cy="10" rx="9" ry="9.500" fill="#e3172a" /><ellipse cx="10" cy="10" rx="3.800" ry="6.800" fill="#1f1f1f" />
      </AppIcon>
      <AppIcon label="Chrome">
        <circle cx="10" cy="10" r="9.200" fill="#30a552" />
        <path d="M2 5.500A9.200 9.200 0 0 1 18 5.500h-8L6 12z" fill="#e2453a" />
        <path d="M18.200 5.500A9.200 9.200 0 0 1 9.500 19.200l4.500-7L10 5.500z" fill="#fbcb3c" />
        <circle cx="10" cy="10" r="4.500" fill="#fff" /><circle cx="10" cy="10" r="3.500" fill="#4285f4" />
      </AppIcon>
      <AppIcon label="Coc Coc" className="mx-[3px] w-[31px] border-b-2 border-[#6fa8d8] pt-[2px]">
        <circle cx="9.500" cy="10.500" r="9" fill="#69b05a" />
        <path d="M10 1l1 6M13.500 1l-2 6M18 4l-6 5" stroke="#fff" strokeWidth="1.600" />
        <path d="M15 1l-3 6M19 2l-6 6" stroke="#ee8a33" strokeWidth="1.600" />
        <circle cx="9.500" cy="11" r="3.800" fill="none" stroke="#fff" strokeWidth="1.600" />
      </AppIcon>
      <button aria-label="Word" className="flex h-full w-9 items-center justify-center border-b-2 border-[#76b0e0] bg-[#4a4a4b]"><WordLogo className="h-4 w-4" /></button>
      <div className="ml-auto flex h-full items-center">
        <button aria-label="Show hidden icons" className="w-[17px]">
          <svg viewBox="0 0 9 6" className="h-[6px] w-[9px]" fill="none" stroke="#fff" strokeWidth="1.200"><path d="M.5 5l4-4 4 4" /></svg>
        </button>
        <svg viewBox="0 0 13 10" className="h-[10px] w-[13px]" fill="none" stroke="#fff"><path d="M4.500 3.500h7v5h-7zM12.500 5v2" /><path d="M5.500 5h4v2h-4z" fill="#fff" /><path d="M.5 1.500h5v2c0 2-4 2-4 0v-2M2 0v1.500M4 0v1.500M3 5v2.500h1" /></svg>
        <svg viewBox="0 0 17 10" className="ml-[5px] h-[10px] w-[17px]" fill="none" stroke="#ddd"><path d="M.5.500h16v9H.5z" /><path d="M2 3h13M2 5h13" strokeDasharray="1 1" /><path d="M4 7.500h9" /></svg>
        <span className="w-[34px] text-center text-[9px]">ENG</span>
        <span className="w-[42px] whitespace-nowrap text-center text-[9px] leading-[14px]">12:19 PM<br />2/19/2020</span>
        <button aria-label="Notifications" className="ml-[12px] w-[27px]">
          <svg viewBox="0 0 13 13" className="h-[13px] w-[13px]" fill="none" stroke="#fff"><path d="M.5.500h12v9H8v3l-3-3H.5z" /></svg>
        </button>
        <i className="mr-[3px] h-full w-px bg-gray-600" />
      </div>
    </footer>
  );
}

export default function App() {
  return (
    <div className="flex h-screen flex-col overflow-hidden bg-[#cbcfd5] font-[Open_Sans,sans-serif]">
      <TitleBar />
      <Tabs />
      <div className="flex h-[65px] shrink-0 bg-linear-to-b from-white via-[#fafbfc] to-[#e6e8ec] font-[Roboto] text-[9px] text-[#333] [&_.font-serif]:font-[Liberation_Serif]">
        <Clipboard />
        <FontGroup />
        <ParagraphGroup />
        <StylesGroup />
        <EditingGroup />
        <div className="w-12 shrink-0" />
      </div>
      <Ruler />
      <main className="relative flex min-h-0 flex-1">
        <div className="flex min-w-0 flex-1 overflow-hidden border-t border-[#cbcfd5] bg-[#b9bdc3] pl-[18px] pr-6">
          <Page />
        </div>
        <VerticalScroll />
        <div className="pointer-events-none absolute bottom-[-5px] right-[40px] z-10 text-[#b4b4b4]">
          <p className="text-[14px] leading-5">Activate Windows</p>
          <p className="text-[11px] leading-[14px]">Go to Settings to activate Windows.</p>
        </div>
      </main>
      <HorizontalScroll />
      <StatusBar />
      <Taskbar />
    </div>
  );
}
